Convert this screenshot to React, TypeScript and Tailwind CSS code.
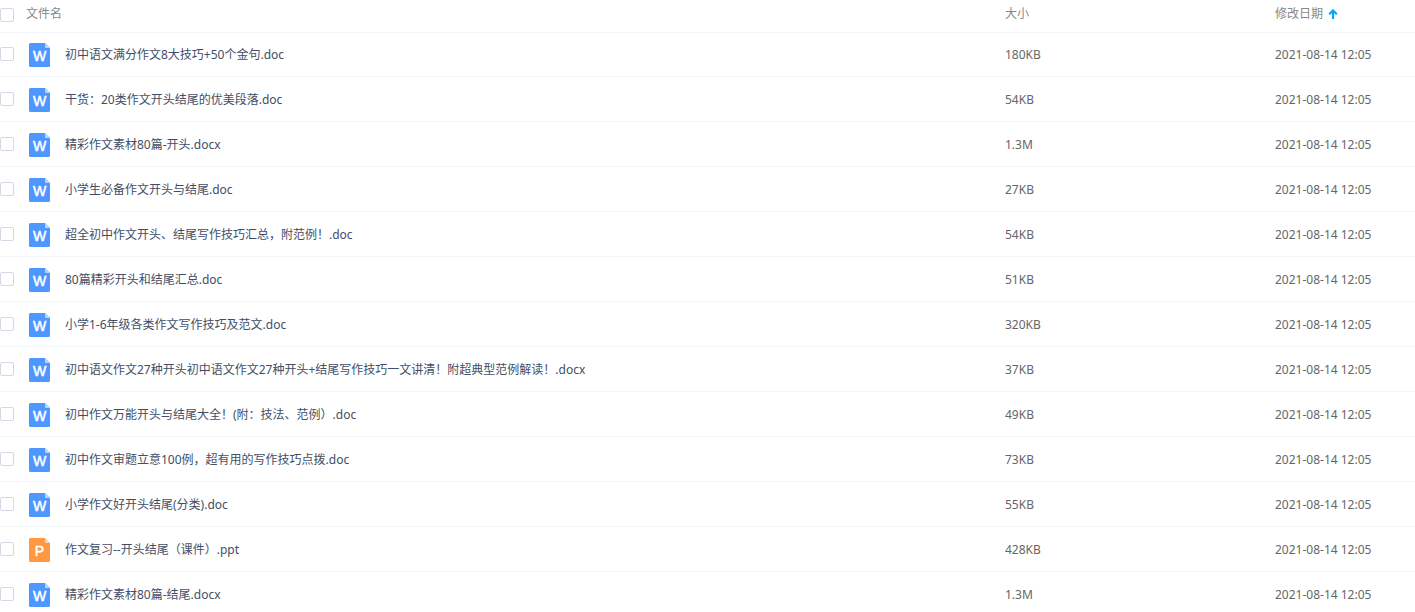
import React from 'react';

type FileKind = 'word' | 'ppt';

interface FileItem {
    name: string;
    size: string;
    modified: string;
    kind: FileKind;
}

const MODIFIED = '2021-08-14 12:05';

const FILES: FileItem[] = [
    { name: '初中语文满分作文8大技巧+50个金句.doc', size: '180KB', modified: MODIFIED, kind: 'word' },
    { name: '干货：20类作文开头结尾的优美段落.doc', size: '54KB', modified: MODIFIED, kind: 'word' },
    { name: '精彩作文素材80篇-开头.docx', size: '1.3M', modified: MODIFIED, kind: 'word' },
    { name: '小学生必备作文开头与结尾.doc', size: '27KB', modified: MODIFIED, kind: 'word' },
    { name: '超全初中作文开头、结尾写作技巧汇总，附范例！.doc', size: '54KB', modified: MODIFIED, kind: 'word' },
    { name: '80篇精彩开头和结尾汇总.doc', size: '51KB', modified: MODIFIED, kind: 'word' },
    { name: '小学1-6年级各类作文写作技巧及范文.doc', size: '320KB', modified: MODIFIED, kind: 'word' },
    {
        name: '初中语文作文27种开头初中语文作文27种开头+结尾写作技巧一文讲清！附超典型范例解读！.docx',
        size: '37KB',
        modified: MODIFIED,
        kind: 'word',
    },
    { name: '初中作文万能开头与结尾大全！(附：技法、范例）.doc', size: '49KB', modified: MODIFIED, kind: 'word' },
    { name: '初中作文审题立意100例，超有用的写作技巧点拨.doc', size: '73KB', modified: MODIFIED, kind: 'word' },
    { name: '小学作文好开头结尾(分类).doc', size: '55KB', modified: MODIFIED, kind: 'word' },
    { name: '作文复习--开头结尾（课件）.ppt', size: '428KB', modified: MODIFIED, kind: 'ppt' },
    { name: '精彩作文素材80篇-结尾.docx', size: '1.3M', modified: MODIFIED, kind: 'word' },
];

const ICONS = {
    word: { letter: 'W', color: '#4e97ff', fold: '#b8d5ff' },
    ppt: { letter: 'P', color: '#ff9743', fold: '#ffd5b4' },
};

const FileIcon = ({ kind }: { kind: FileKind }) => {
    const { letter, color, fold } = ICONS[kind];

    return (
        <svg width="21" height="24" viewBox="0 0 21 24" className="shrink-0" aria-hidden="true">
            <path d="M1.5 0H16l5 5v17.5a1.5 1.5 0 0 1-1.5 1.5h-18A1.5 1.5 0 0 1 0 22.5v-21A1.5 1.5 0 0 1 1.5 0z" fill={color} />
            <path d="M16 0l5 5h-4a1 1 0 0 1-1-1z" fill={fold} />
            <text
                x="10.5"
                y="18"
                textAnchor="middle"
                fill="#fff"
                stroke="#fff"
                strokeWidth="0.5"
                className="font-['Liberation_Sans',sans-serif] text-[14px]"
            >
                {letter}
            </text>
        </svg>
    );
};

const Checkbox = ({ label }: { label: string }) => (
    <input
        type="checkbox"
        aria-label={label}
        className="block size-3.5 appearance-none rounded-xs border border-[#d3d9e4] bg-white checked:bg-[#06a7ff]"
    />
);

export default function App() {
    return (
        <main className="h-screen overflow-hidden bg-white font-['Noto_Sans','Noto_Sans_CJK_SC',sans-serif] text-xs text-[#666]">
            <table className="w-full table-fixed border-separate border-spacing-0 text-left">
                <colgroup>
                    <col className="w-[26px]" />
                    <col />
                    <col className="w-[270px]" />
                    <col className="w-[140px]" />
                </colgroup>
                <thead className="text-[#888]">
                    <tr className="h-8">
                        <th className="p-0 pb-0.5">
                            <Checkbox label="全选" />
                        </th>
                        <th className="p-0 pb-1 font-normal">文件名</th>
                        <th className="p-0 pb-1 font-normal">大小</th>
                        <th className="p-0 pb-1 font-normal" aria-sort="ascending">
                            <button type="button" className="flex items-center gap-[5px]">
                                修改日期
                                <svg width="10" height="10" viewBox="0 0 10 10" fill="none" aria-hidden="true">
                                    <path d="M5 10V2M1.2 5.2L5 1.4L8.8 5.2" stroke="#06a7ff" strokeWidth="2.2" />
                                </svg>
                            </button>
                        </th>
                    </tr>
                </thead>
                <tbody className="[&>tr:first-child>td]:border-t">
                    {FILES.map((file) => (
                        <tr key={file.name} className="h-[45px] *:border-b *:border-[#f1f5fc] *:p-0 *:pt-px">
                            <td>
                                <div className="pb-0.5">
                                    <Checkbox label={file.name} />
                                </div>
                            </td>
                            <td>
                                <div className="flex items-center gap-[15px] pl-[3px]">
                                    <FileIcon kind={file.kind} />
                                    <a href="#" className="truncate text-[#424e67]">
                                        {file.name}
                                    </a>
                                </div>
                            </td>
                            <td>{file.size}</td>
                            <td>{file.modified}</td>
                        </tr>
                    ))}
                </tbody>
            </table>
        </main>
    );
}
